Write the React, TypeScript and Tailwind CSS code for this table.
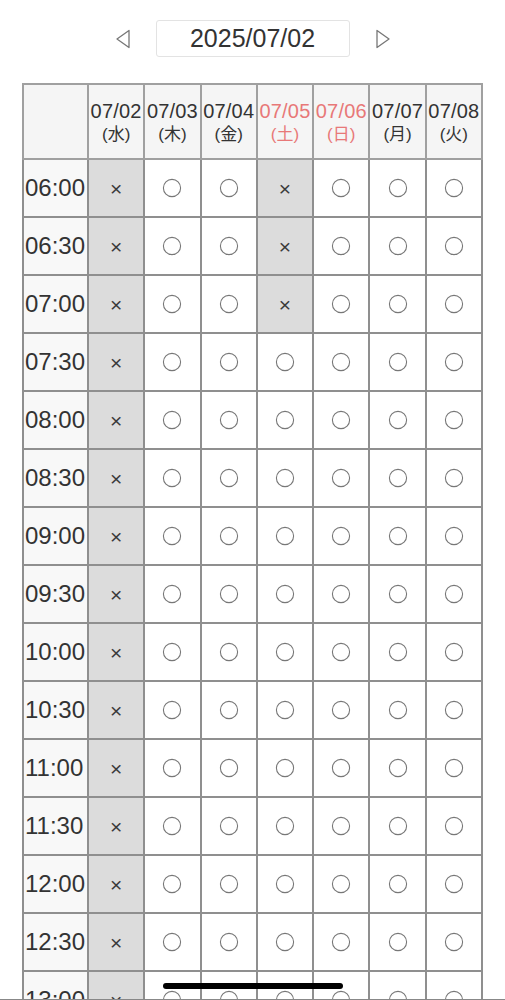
const days = [
  { date: "07/02", dow: "水", weekend: false },
  { date: "07/03", dow: "木", weekend: false },
  { date: "07/04", dow: "金", weekend: false },
  { date: "07/05", dow: "土", weekend: true },
  { date: "07/06", dow: "日", weekend: true },
  { date: "07/07", dow: "月", weekend: false },
  { date: "07/08", dow: "火", weekend: false },
];

const times: string[] = [];
for (let h = 6; h <= 13; h++) {
  times.push(`${String(h).padStart(2, "0")}:00`);
  times.push(`${String(h).padStart(2, "0")}:30`);
}

// 07/02 is closed all day, 07/05 closed in the early slots
function isClosed(dayIdx: number, rowIdx: number) {
  if (dayIdx === 0) return true;
  if (dayIdx === 3 && rowIdx < 3) return true;
  return false;
}

function Arrow({ dir }: { dir: "left" | "right" }) {
  return (
    <svg width="16" height="20" viewBox="0 0 16 20" className="block">
      {dir === "left" ? (
        <polygon points="14,1.5 14,18.5 2,10" fill="none" stroke="#777" strokeWidth="1.3" strokeLinejoin="round" />
      ) : (
        <polygon points="2,1.5 2,18.5 14,10" fill="none" stroke="#777" strokeWidth="1.3" strokeLinejoin="round" />
      )}
    </svg>
  );
}

function Circle() {
  return (
    <svg width="20" height="20" viewBox="0 0 20 20" className="mx-auto block">
      <circle cx="10" cy="10" r="8.6" fill="none" stroke="#777" strokeWidth="1.1" />
    </svg>
  );
}

export default function App() {
  return (
    <div
      className="min-h-screen bg-white text-[#333]"
      style={{ fontFamily: '"Liberation Sans", "Noto Sans CJK JP", sans-serif' }}
    >
      <div className="flex items-center justify-center gap-[25px] pt-[20px]">
        <button type="button" className="p-0">
          <Arrow dir="left" />
        </button>
        <div className="flex h-[37px] w-[194px] items-center justify-center rounded-[3px] border border-[#e3e3e3] text-[25px] leading-none text-[#333]">
          2025/07/02
        </div>
        <button type="button" className="p-0">
          <Arrow dir="right" />
        </button>
      </div>

      <div className="mt-[26px] pl-[22px]">
        <table className="w-[461px] table-fixed border-collapse">
          <colgroup>
            <col className="w-[65px]" />
            {days.map((d) => (
              <col key={d.date} />
            ))}
          </colgroup>
          <thead>
            <tr className="h-[75px]">
              <th className="border-2 border-[#a0a0a0] bg-[#f5f5f5]" />
              {days.map((d) => (
                <th
                  key={d.date}
                  className={`border-2 border-[#a0a0a0] bg-[#f5f5f5] p-0 pt-[2px] text-center font-normal ${
                    d.weekend ? "text-[#e87878]" : "text-[#333]"
                  }`}
                >
                  <div className="whitespace-nowrap text-[20px] leading-[24px] tracking-[0.2px]">{d.date}</div>
                  <div className="text-[17px] leading-[24px]">({d.dow})</div>
                </th>
              ))}
            </tr>
          </thead>
          <tbody>
            {times.map((t, ri) => (
              <tr key={t} className="h-[58px]">
                <td className="border-2 border-[#8f8f8f] bg-[#f8f8f8] p-0 pl-[1px] text-[24px] leading-none text-[#333]">
                  {t}
                </td>
                {days.map((d, di) =>
                  isClosed(di, ri) ? (
                    <td
                      key={d.date}
                      className="border-2 border-[#8f8f8f] bg-[#dcdcdc] p-0 text-center text-[21px] leading-none text-[#3a3a3a]"
                    >
                      ×
                    </td>
                  ) : (
                    <td key={d.date} className="border-2 border-[#8f8f8f] bg-white p-0">
                      <Circle />
                    </td>
                  )
                )}
              </tr>
            ))}
          </tbody>
        </table>
      </div>

      <div className="fixed bottom-0 left-0 right-0 h-px bg-[#888]" />
      <div className="fixed bottom-[11px] left-[163px] h-[6px] w-[180px] rounded-full bg-black" />
    </div>
  );
}
